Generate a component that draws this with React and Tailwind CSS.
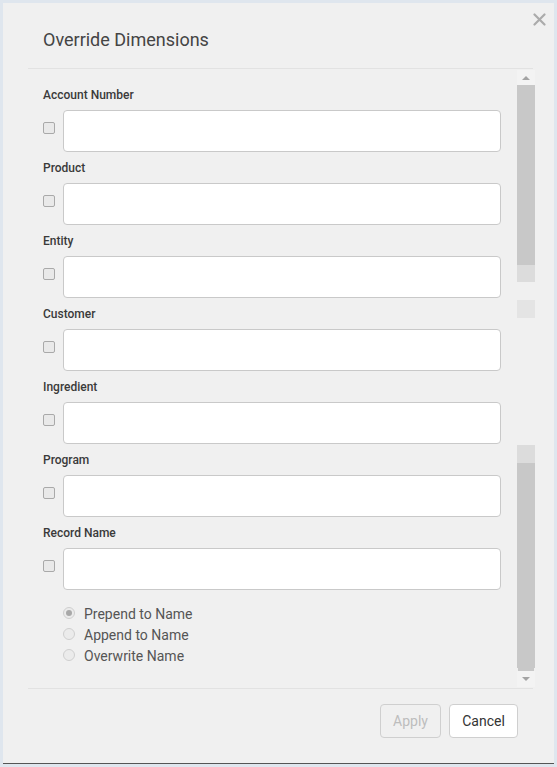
import React from 'react';

const fields = ['Account Number', 'Product', 'Entity', 'Customer', 'Ingredient', 'Program', 'Record Name'];
const modes = ['Prepend to Name', 'Append to Name', 'Overwrite Name'];

function Scrollbar() {
  return (
    <div className="w-[18px] flex flex-col pt-[1px]">
      {/* up arrow */}
      <div className="h-[15px] flex items-center justify-center bg-[#f3f3f3]">
        <div className="w-0 h-0 border-l-[4px] border-r-[4px] border-b-[4px] border-l-transparent border-r-transparent border-b-[#a3a3a3]" />
      </div>
      <div className="h-[180px] bg-[#c8c8c8]" />
      <div className="h-[17px] bg-[#dcdcdc]" />
      <div className="h-[18px]" />
      <div className="h-[18px] bg-[#e4e4e4]" />
      <div className="h-[127px]" />
      <div className="h-[18px] bg-[#dcdcdc]" />
      <div className="h-[205px] bg-[#c8c8c8]" />
      <div className="h-[3px] mx-[1px] bg-[#c8c8c8]" />
      <div className="h-[16px] flex items-center justify-center bg-[#f3f3f3]">
        <div className="w-0 h-0 border-l-[4px] border-r-[4px] border-t-[4px] border-l-transparent border-r-transparent border-t-[#a3a3a3]" />
      </div>
    </div>
  );
}

export default function App() {
  return (
    <div className="w-[557px] h-[767px] bg-[#dfe6ee] p-[3px]" style={{ fontFamily: 'Roboto, "Liberation Sans", sans-serif' }}>
      <div className="relative w-[551px] h-[761px] bg-[#f0f0f0] border-b border-[#555] flex flex-col">
        {/* Close */}
        <button className="absolute right-[7px] top-[8px] w-[16px] h-[16px] flex items-center justify-center text-[#ababab]">
          <svg width="13" height="13" viewBox="0 0 13 13">
            <path d="M1.5 1.5 L11.5 11.5 M11.5 1.5 L1.5 11.5" stroke="currentColor" strokeWidth="2.2" strokeLinecap="round" />
          </svg>
        </button>

        {/* Header */}
        <div className="h-[65px] pl-[40px] pt-[25px]">
          <h1 className="text-[18px] leading-[24px] text-[#444] font-normal">Override Dimensions</h1>
        </div>
        <div className="ml-[25px] mr-[21px] h-px bg-[#e2e2e2]" />

        {/* Body */}
        <div className="h-[619px] flex pl-[40px] pr-[19px]">
          <div className="flex-1 pt-[18px] mr-[16px]">
            {fields.map((f) => (
              <div key={f} className="mb-[8px]">
                <label className="block text-[12px] leading-[16px] font-medium text-[#3a3a3a]">{f}</label>
                <div className="flex items-start mt-[7px]">
                  <div className="mt-[12px] w-[12px] h-[12px] rounded-[2px] border border-[#a9a9a9] bg-[#e9e9e9]" />
                  <input className="ml-[8px] flex-1 h-[42px] rounded-[4px] border border-[#c9c9c9] bg-white outline-none" />
                </div>
              </div>
            ))}
            <div className="pl-[20px] mt-[14px] text-[14px] leading-[21px] text-[#555]">
              {modes.map((m, i) => (
                <div key={m} className="flex items-center">
                  <div className="w-[12px] h-[12px] rounded-full border border-[#cfcfcf] bg-[#ebebeb] flex items-center justify-center -mt-[3px]">
                    {i === 0 && <div className="w-[6px] h-[6px] rounded-full bg-[#a8a8a8]" />}
                  </div>
                  <span className="ml-[9px]">{m}</span>
                </div>
              ))}
            </div>
          </div>
          <Scrollbar />
        </div>

        <div className="ml-[25px] mr-[21px] h-px bg-[#e2e2e2]" />

        {/* Footer */}
        <div className="flex justify-end gap-[8px] pt-[15px] pr-[36px]">
          <button className="w-[61px] h-[34px] rounded-[4px] border border-[#cfcfcf] text-[14px] text-[#bdbdbd]" disabled>
            Apply
          </button>
          <button className="w-[69px] h-[34px] rounded-[4px] border border-[#cfcfcf] bg-white text-[14px] text-[#333]">
            Cancel
          </button>
        </div>
      </div>
    </div>
  );
}
